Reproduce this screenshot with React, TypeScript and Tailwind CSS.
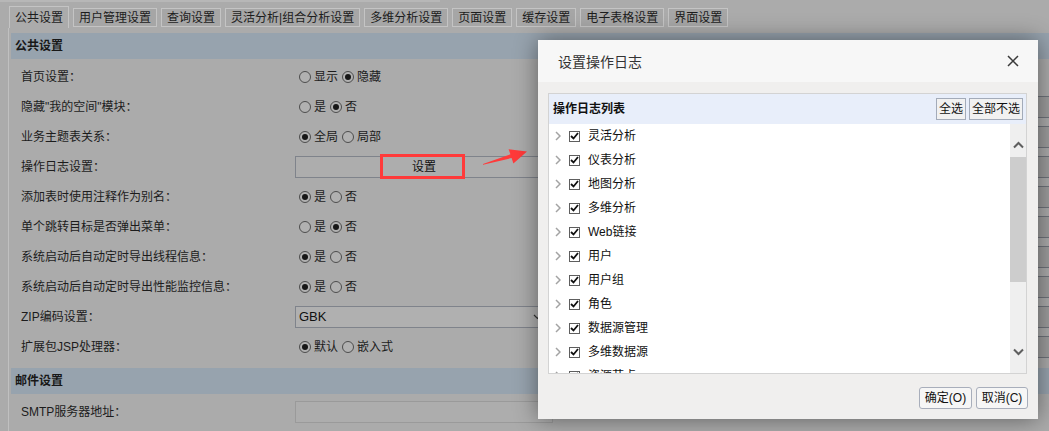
import React from 'react';

type Row = {
  label: string;
  kind: 'radio' | 'button' | 'select';
  opts?: string[];
  sel?: number;
  value?: string;
  extra?: boolean;
};

const tabs = ['公共设置', '用户管理设置', '查询设置', '灵活分析|组合分析设置', '多维分析设置', '页面设置', '缓存设置', '电子表格设置', '界面设置'];

const rows: Row[] = [
  { label: '首页设置：', kind: 'radio', opts: ['显示', '隐藏'], sel: 1 },
  { label: '隐藏"我的空间"模块：', kind: 'radio', opts: ['是', '否'], sel: 1, extra: true },
  { label: '业务主题表关系：', kind: 'radio', opts: ['全局', '局部'], sel: 0, extra: true },
  { label: '操作日志设置：', kind: 'button', extra: true },
  { label: '添加表时使用注释作为别名：', kind: 'radio', opts: ['是', '否'], sel: 0, extra: true },
  { label: '单个跳转目标是否弹出菜单：', kind: 'radio', opts: ['是', '否'], sel: 1, extra: true },
  { label: '系统启动后自动定时导出线程信息：', kind: 'radio', opts: ['是', '否'], sel: 0, extra: true },
  { label: '系统启动后自动定时导出性能监控信息：', kind: 'radio', opts: ['是', '否'], sel: 0, extra: true },
  { label: 'ZIP编码设置：', kind: 'select', value: 'GBK', extra: true },
  { label: '扩展包JSP处理器：', kind: 'radio', opts: ['默认', '嵌入式'], sel: 0, extra: true },
];

const logItems = ['灵活分析', '仪表分析', '地图分析', '多维分析', 'Web链接', '用户', '用户组', '角色', '数据源管理', '多维数据源', '资源节点'];

function Radio({ checked }: { checked: boolean }) {
  return (
    <span className="w-[12px] h-[12px] rounded-full border border-[#4d4d4d] bg-[#b1b1b1] flex items-center justify-center shrink-0">
      {checked && <span className="w-[6px] h-[6px] rounded-full bg-[#161616]" />}
    </span>
  );
}

function SectionHeader({ title }: { title: string }) {
  return (
    <div className="ml-[2px] h-[26px] bg-[#97a3ae] flex items-center pl-[4px] font-bold text-[#181818]">
      {title}
    </div>
  );
}

function Chevron({ up }: { up: boolean }) {
  return (
    <svg width="11" height="8" viewBox="0 0 11 8">
      <path d={up ? 'M1 6.5 L5.5 2 L10 6.5' : 'M1 1.5 L5.5 6 L10 1.5'} fill="none" stroke="#5f5f5f" strokeWidth="2" />
    </svg>
  );
}

export default function App() {
  return (
    <div className="relative w-[1049px] h-[431px] overflow-hidden bg-[#ababab] text-[12px] text-[#1c1c1c] font-['Liberation_Sans','Noto_Sans_CJK_SC',sans-serif]">
      <div className="h-[2px] w-[440px] bg-[#b7b7b7]" />

      {/* tabs */}
      <div className="flex items-end pl-[9px] pt-[4px] gap-[4px] h-[26px]">
        {tabs.map((t, i) =>
          i === 0 ? (
            <div key={t} className="h-[22px] px-[5px] flex items-center border border-b-0 border-[#c4c4c4] bg-[#ababab] leading-none">
              {t}
            </div>
          ) : (
            <div key={t} className="h-[19px] mb-[1px] px-[5px] flex items-center border border-[#c4c4c4] bg-[#a6a6a6] leading-none">
              {t}
            </div>
          )
        )}
      </div>

      {/* content panel */}
      <div className="ml-[8px] border-l border-[#c0c0c0] pt-[5px] h-[403px]">
        <SectionHeader title="公共设置" />
        <div className="mt-[3px]">
          {rows.map((r) => (
            <div key={r.label} className="h-[30px] flex items-center pl-[12px]">
              <div className="w-[274px] shrink-0">{r.label}</div>
              <div className="w-[258px] shrink-0 flex items-center">
                {r.kind === 'radio' && (
                  <div className="flex items-center gap-[4px] pl-[4px]">
                    {r.opts!.map((o, i) => (
                      <label key={o} className="flex items-center gap-[3px]">
                        <Radio checked={r.sel === i} />
                        <span>{o}</span>
                      </label>
                    ))}
                  </div>
                )}
                {r.kind === 'button' && (
                  <div className="w-full h-[22px] border border-[#7f838b] bg-[#adadad] flex items-center justify-center text-[#111]">
                    设置
                  </div>
                )}
                {r.kind === 'select' && (
                  <div className="w-full h-[22px] border border-[#7f838b] bg-[#b0b0b0] flex items-center justify-between pl-[3px] pr-[10px] text-[13px] text-[#111]">
                    <span>{r.value}</span>
                    <svg width="9" height="6" viewBox="0 0 9 6">
                      <path d="M1 1 L4.5 4.5 L8 1" fill="none" stroke="#333" strokeWidth="1.2" />
                    </svg>
                  </div>
                )}
              </div>
              {r.extra && <div className="ml-[247px] w-[260px] h-[22px] shrink-0 border border-[#6f737b] bg-[#9d9d9d]" />}
            </div>
          ))}
        </div>
        <div className="mt-[6px]">
          <SectionHeader title="邮件设置" />
        </div>
        <div className="mt-[3px] h-[30px] flex items-center pl-[12px]">
          <div className="w-[274px] shrink-0">SMTP服务器地址：</div>
          <div className="w-[258px] h-[22px] shrink-0 border border-[#9a9a9a] bg-[#adadad]" />
        </div>
      </div>

      {/* annotation */}
      <div className="absolute left-[380px] top-[154px] w-[85px] h-[25px] border-[3px] border-[#ff3a3a]" />
      <svg className="absolute left-0 top-0 pointer-events-none" width="1049" height="431">
        <polygon points="483,164 510.4,154.3 508.6,149.2 527,151.6 513.4,163.4 511.6,158 483,164.8" fill="#ff3a3a" />
      </svg>

      {/* modal */}
      <div className="absolute left-[538px] top-[40px] w-[500px] h-[379px] bg-[#f0efee] shadow-[0_0_22px_rgba(0,0,0,0.45)] flex flex-col">
        <div className="h-[42px] bg-[#f7f7f7] flex items-center justify-between pl-[20px] pr-[19px] shrink-0">
          <span className="text-[14px] text-[#333] font-['Noto_Sans_CJK_SC',sans-serif]">设置操作日志</span>
          <svg width="12" height="12" viewBox="0 0 12 12">
            <path d="M1 1 L11 11 M11 1 L1 11" stroke="#3a3a3a" strokeWidth="1.5" />
          </svg>
        </div>

        <div className="ml-[10px] mr-[11px] mt-[11px] h-[281px] border border-[#d3d3d3] bg-white flex flex-col shrink-0">
          <div className="h-[30px] bg-[#e8eefa] flex items-center justify-between pl-[4px] pr-[3px] shrink-0">
            <span className="font-bold text-[#111]">操作日志列表</span>
            <div className="flex gap-[3px]">
              <button className="w-[30px] h-[22px] border border-[#a3abb9] bg-[#f1f1f1] text-[#111] leading-none">全选</button>
              <button className="w-[54px] h-[22px] border border-[#a3abb9] bg-[#f1f1f1] text-[#111] leading-none">全部不选</button>
            </div>
          </div>
          <div className="flex flex-1 overflow-hidden">
            <div className="flex-1 overflow-hidden">
              {logItems.map((item) => (
                <div key={item} className="h-[24px] flex items-center pl-[6px]">
                  <svg width="6" height="10" viewBox="0 0 6 10">
                    <path d="M1 1 L5 5 L1 9" fill="none" stroke="#a3a3a3" strokeWidth="1.5" />
                  </svg>
                  <span className="ml-[8px] w-[11px] h-[11px] border border-[#5e5e5e] bg-white flex items-center justify-center">
                    <svg width="9" height="8" viewBox="0 0 9 8">
                      <path d="M1 4 L3.5 6.5 L8 1" fill="none" stroke="#111" strokeWidth="1.8" />
                    </svg>
                  </span>
                  <span className="ml-[8px] text-[#111]">{item}</span>
                </div>
              ))}
            </div>
            <div className="w-[16px] bg-[#efefef] flex flex-col items-center pt-[17px] pb-[17px]">
              <Chevron up />
              <div className="mt-[8px] w-[16px] h-[125px] bg-[#cdcdcd]" />
              <div className="flex-1" />
              <Chevron up={false} />
            </div>
          </div>
        </div>

        <div className="flex justify-end gap-[4px] pr-[10px] mt-[13px]">
          <button className="w-[53px] h-[22px] rounded-[3px] border border-[#a8aebb] bg-[#f6f6f6] text-[#111] leading-none">确定(O)</button>
          <button className="w-[52px] h-[22px] rounded-[3px] border border-[#a8aebb] bg-[#f6f6f6] text-[#111] leading-none">取消(C)</button>
        </div>
      </div>
    </div>
  );
}
